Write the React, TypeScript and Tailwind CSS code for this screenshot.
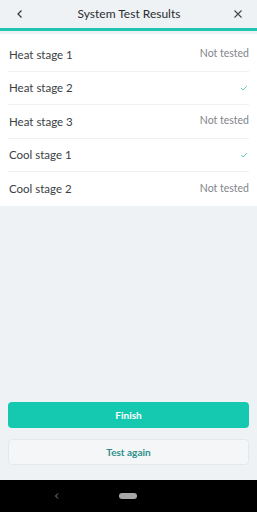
import React from 'react';

const rows = [
  { name: 'Heat stage 1', status: 'none' },
  { name: 'Heat stage 2', status: 'ok' },
  { name: 'Heat stage 3', status: 'none' },
  { name: 'Cool stage 1', status: 'ok' },
  { name: 'Cool stage 2', status: 'none' },
];

export default function App() {
  return (
    <div className="w-[257px] h-[512px] flex flex-col bg-[#eff2f5] font-['Lato',sans-serif] text-[#2b2f33]">
      <header className="h-[28px] flex items-center justify-between pl-[15px] pr-[14px]">
        <svg width="10" height="10" viewBox="0 0 10 10" fill="none" stroke="#333" strokeWidth="1.2">
          <path d="M6.5 1.5 L3 5 L6.5 8.5" />
        </svg>
        <h1 className="text-[12px] font-normal text-[#2a2d30]">System Test Results</h1>
        <svg width="10" height="10" viewBox="0 0 10 10" fill="none" stroke="#444" strokeWidth="1.1">
          <path d="M1.5 1.5 L8.5 8.5 M8.5 1.5 L1.5 8.5" />
        </svg>
      </header>
      <div className="h-[3px] bg-[#22c6b0]" />

      <div className="mt-[3px] bg-white pt-[4px]">
        {rows.map((r, i) => (
          <div
            key={r.name}
            className={
              i < rows.length - 1
                ? 'h-[33.5px] mx-[8px] flex items-center justify-between border-b border-[#eef0f2]'
                : 'h-[33.5px] mx-[8px] flex items-center justify-between'
            }
          >
            <span className="text-[11.5px] pl-[1px] text-[#3a3e42]">{r.name}</span>
            {r.status === 'ok' ? (
              <svg width="8" height="8" viewBox="0 0 8 8" fill="none" stroke="#5cc9bb" strokeWidth="1" className="mr-[1px]">
                <path d="M1.2 4.2 L3.1 6 L6.8 2.2" />
              </svg>
            ) : (
              <span className="text-[10.5px] text-[#808489]">Not tested</span>
            )}
          </div>
        ))}
      </div>

      <div className="flex-1" />

      <div className="px-[8px] flex flex-col gap-[11px] pb-[15px]">
        <button className="h-[26px] rounded-[4px] bg-[#14c9b0] text-white text-[10px] font-bold">
          Finish
        </button>
        <button className="h-[26px] rounded-[4px] bg-[#f4f6f8] border border-[#e4e8ec] text-[#2f8f88] text-[10px] font-bold">
          Test again
        </button>
      </div>

      <nav className="h-[32px] bg-black flex items-center">
        <svg width="8" height="8" viewBox="0 0 8 8" fill="none" stroke="#8a8a8a" strokeWidth="1" className="ml-[53px]">
          <path d="M5 1.5 L2.5 4 L5 6.5" />
        </svg>
        <div className="ml-[58px] w-[18px] h-[6px] rounded-full bg-[#a8a8a8]" />
      </nav>
    </div>
  );
}
